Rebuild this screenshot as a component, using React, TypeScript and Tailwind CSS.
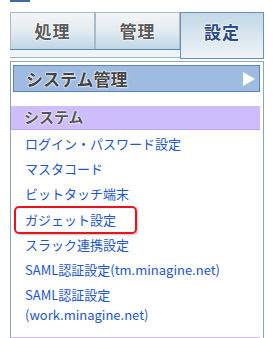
import React from "react";

const links = [
  "ログイン・パスワード設定",
  "マスタコード",
  "ビットタッチ端末",
  "ガジェット設定",
  "スラック連携設定",
  "SAML認証設定(tm.minagine.net)",
];

const font = "font-['Noto_Sans_CJK_JP','Noto_Sans',sans-serif]";
const halo = "[text-shadow:0_0_2px_#fff,0_0_2px_#fff,0_0_1px_#fff]";

export default function App() {
  return (
    <div className={`w-[280px] h-[338px] overflow-hidden bg-white ${font}`}>
      <div className="ml-[10px] w-[20px] h-[2px] bg-[#3f6aa6]" />
      <div className="mt-[10px] ml-[10px] flex items-start">
        <div className="flex flex-col">
          <div className="flex h-[37px]">
            <Tab label="処理" />
            <Tab label="管理" />
          </div>
          <div className="h-[9px] w-[170px] border-t border-t-[#5b88be] border-b border-b-[#9db4c4] bg-[#eef4f8]" />
        </div>
        <div className="w-[84px] h-[47px] border border-[#6b90bd] bg-gradient-to-b from-[#c3d8e8] to-[#eef3f6] flex justify-center pt-[7px]">
          <span className={`text-[17px] leading-[24px] font-bold text-[#2b4a86] tracking-[1px] ${halo}`}>設定</span>
        </div>
      </div>
      <div className="mt-[2px] ml-[10px] w-[254px] h-[300px] border border-[#8ba6ae] pt-[3px] pl-[2px] pr-[3px]">
        <div className="h-[27px] border border-[#5f84ba] bg-[#a0bbe2] flex items-center justify-between pl-[12px] pr-[4px]">
          <span className={`text-[17px] font-bold text-[#444] ${halo}`}>システム管理</span>
          <svg width="12" height="14" viewBox="0 0 12 14">
            <polygon points="0,0 12,7 0,14" fill="#fff" />
          </svg>
        </div>
        <div className="mt-[14px] -ml-[2px] h-[24px] bg-[#cdbdfb] border-b border-b-[#bfa6f5] flex items-center pl-[13px]">
          <span className={`text-[15px] font-bold text-[#555] ${halo}`}>システム</span>
        </div>
        <ul className="mt-[4px] pl-[12px] flex flex-col gap-[5.2px] text-[13px] leading-[20px] text-[#2356c8]">
          {links.map((l) => (
            <li key={l} className="relative whitespace-nowrap">
              {l}
              {l === "ガジェット設定" && (
                <span className="absolute -left-[11px] -top-[4px] w-[123px] h-[28px] border-2 border-[#e8161c] rounded-[5px] shadow-[1px_1px_2px_rgba(0,0,0,0.25)]" />
              )}
            </li>
          ))}
          <li>
            SAML認証設定
            <br />
            (work.minagine.net)
          </li>
        </ul>
        <div className="mt-[12px] -ml-[2px] h-[24px] bg-[#cdbdfb]" />
      </div>
    </div>
  );
}

function Tab({ label }: { label: string }) {
  return (
    <div className="w-[85px] h-[37px] border border-[#a7bcc6] border-b-0 bg-gradient-to-b from-[#f3f5f6] via-[#e3ebf0] to-[#bfd6e8] flex items-center justify-center">
      <span className={`text-[17px] font-bold text-[#5a5a5a] tracking-[1px] ${halo}`}>{label}</span>
    </div>
  );
}
